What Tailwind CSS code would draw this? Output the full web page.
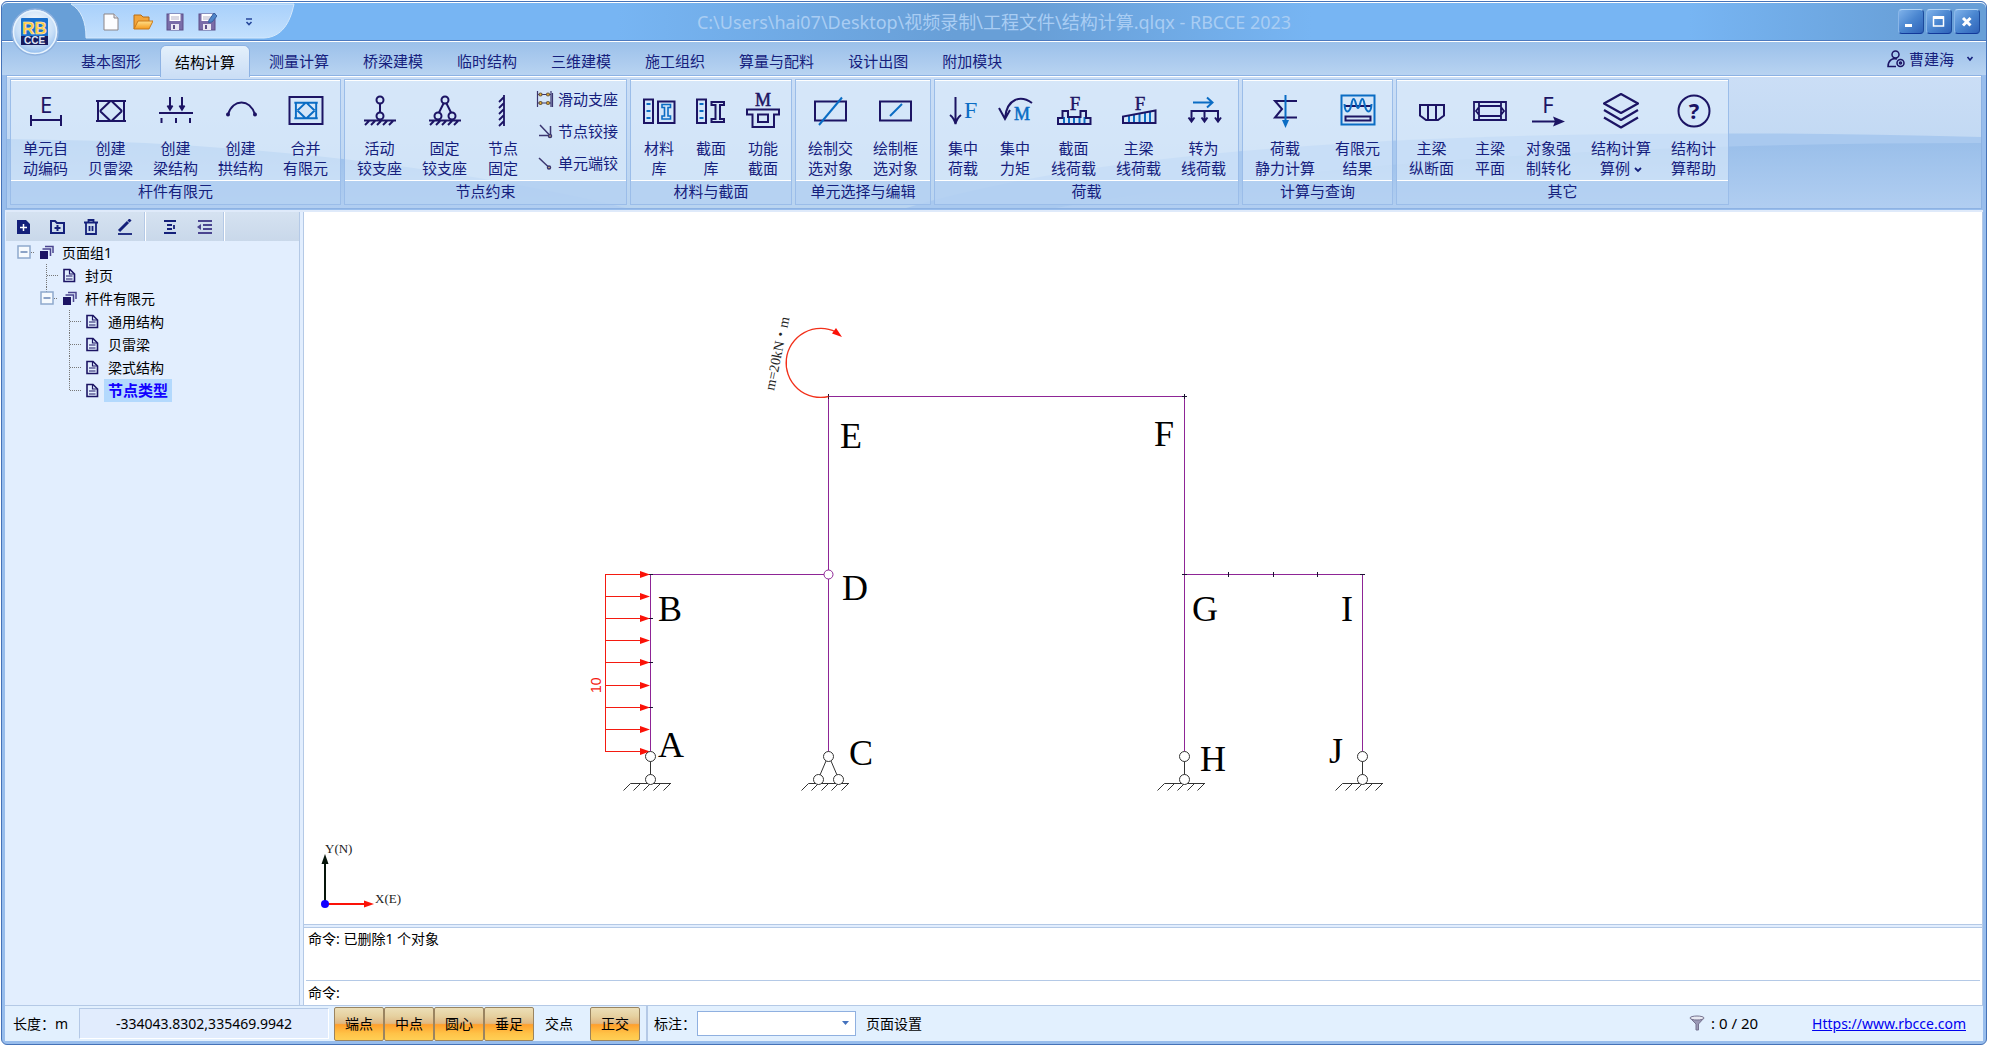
<!DOCTYPE html>
<html lang="zh-CN">
 <head>
  <meta charset="utf-8"/>
  <meta content="width=device-width, initial-scale=1" name="viewport"/>
  <title>结构计算.qlqx - RBCCE 2023</title>
  <script src="https://cdn.jsdelivr.net/npm/@tailwindcss/browser@4"></script>
 </head>
 <body class="h-screen overflow-hidden bg-white pt-px pb-px pl-px pr-0.5 font-['Noto_Sans','Noto_Sans_CJK_SC',sans-serif] text-sm text-black">
  <!-- Shared icon parts -->
  <svg aria-hidden="true" class="absolute size-0">
   <defs>
    <g id="bailey">
     <path d="M3 8H33M3 28H33M5 8V28M31 8V28M7 18L17 8.500M29 18L19 8.500M7 18L17 27.500M29 18L19 27.500"/>
    </g>
    <g id="hatch">
     <path d="M2 27.500H34M7 28L3 32M13 28L9 32M19 28L15 32M25 28L21 32M31 28L27 32"/>
    </g>
    <g id="doc">
     <path d="M6 5.500H12L16.500 10V17.500H6Z" fill="none" stroke="#1c1464" stroke-width="1.600"/>
     <path d="M11.500 5.500V10H16M8 12H14.500M8 15H14.500" fill="none" stroke="#1c1464" stroke-width="1.200"/>
    </g>
    <g id="pages">
     <path d="M10 5.500H18V12M7.500 8H15.500V15" fill="none" stroke="#4b4590" stroke-width="1.500"/>
     <rect fill="#1c1464" height="8" width="8" x="5" y="10"/>
    </g>
    <g id="minus-box">
     <rect fill="#f6fafe" height="12" stroke="#8fa9cd" stroke-width="1.500" width="12" x="6" y="5"/>
     <path d="M8.500 11H15.500" stroke="#6886b5" stroke-width="1.500"/>
    </g>
    <g id="ground" fill="none" stroke="#333">
     <path d="M-20 27.500H20.500M-20 27.500L-27 34.500M-10 27.500L-17 34.500M0 27.500L-7 34.500M10 27.500L3 34.500M20 27.500L13 34.500"/>
    </g>
    <g id="roller" stroke="#333">
     <use href="#ground"/>
     <path d="M0 5V19"/>
     <circle cx="0" cy="0.500" fill="#fff" r="5"/>
     <circle cx="0" cy="23.500" fill="#fff" r="5"/>
    </g>
    <path id="head" d="M0 0L-10 -3.500V3.500Z"/>
    <linearGradient id="qa" x1="0" x2="0" y1="0" y2="1">
     <stop offset="0" stop-color="#a8d0fb"/>
     <stop offset="1" stop-color="#c3e0fd"/>
    </linearGradient>
    <linearGradient id="folder" x1="0" x2="0" y1="0" y2="1">
     <stop offset="0" stop-color="#ffe08a"/>
     <stop offset="1" stop-color="#f59a1c"/>
    </linearGradient>
    <linearGradient id="wave" x1="0" x2="0" y1="0" y2="1">
     <stop offset="0" stop-color="#9abfea"/>
     <stop offset="1" stop-color="#b1cef1"/>
    </linearGradient>
    <radialGradient id="orb" cx="0.500" cy="0.350" r="0.700">
     <stop offset="0" stop-color="#ffffff"/>
     <stop offset="0.600" stop-color="#c6def7"/>
     <stop offset="1" stop-color="#7fb0ea"/>
    </radialGradient>
   </defs>
  </svg>

  <div class="relative flex h-full flex-col rounded-md border border-[#4673b8] bg-[#98bdec]">
   <!-- Application button -->
   <button aria-label="RBCCE" class="absolute top-[6px] left-[9px] z-10" type="button">
    <svg class="size-12" viewBox="0 0 48 48">
     <circle cx="24" cy="24" fill="url(#orb)" r="23" stroke="#8fb2df" stroke-width="1.500"/>
     <circle cx="24" cy="24" fill="none" r="21.500" stroke="#e8f3fd" stroke-width="1.500"/>
     <rect fill="#1b70cc" height="27" rx="1" width="27" x="10" y="10"/>
     <rect fill="#171a5e" height="9" width="27" x="10" y="28"/>
     <text fill="#ffc63a" font-family="Liberation Sans" font-size="17" font-weight="bold" stroke="#fff3cf" stroke-width="0.500" text-anchor="middle" x="23.500" y="26">RB</text>
     <text fill="#dfe6f5" font-family="Liberation Sans" font-size="10" font-weight="bold" text-anchor="middle" x="23.500" y="36">CCE</text>
    </svg>
   </button>

   <!-- Title bar -->
   <header class="relative flex h-[39px] shrink-0 items-center rounded-t-md border-t border-b border-t-white border-b-[#4d79be] bg-[linear-gradient(90deg,#689fd7_0%,#689fd7_4%,#77b5f3_14%,#77b5f3_31%,#689fd7_48%,#689fd7_52%,#77b5f3_66%,#77b5f3_85%,#689fd7_97%)]">
    <svg class="absolute top-0 left-0 h-9 w-[300px]" viewBox="0 0 300 36">
     <path d="M69 1C79 7 84 18 84 35H262C280 34 288 20 292 1Z" fill="url(#qa)" stroke="#d5e9fc"/>
    </svg>
    <nav class="relative flex items-center gap-3 pl-[99px]">
     <button aria-label="新建" type="button"><svg class="size-5" viewBox="0 0 20 20"><path d="M3 2H13L17 6V18H3Z" fill="#fcfdff" stroke="#8c8587"/><path d="M13 2V6H17" fill="#dfe3ee" stroke="#8c8587"/></svg></button>
     <button aria-label="打开" type="button"><svg class="size-5" viewBox="0 0 20 20"><path d="M1 17V3H8L10 5H16V9" fill="#f3a53a" stroke="#b96c12"/><path d="M1 17L5 9H20L16 17Z" fill="url(#folder)" stroke="#c9791a"/></svg></button>
     <button aria-label="保存" type="button"><svg class="size-5" viewBox="0 0 20 20"><rect fill="#7a6da8" height="16" stroke="#5d4f88" width="16" x="2" y="2"/><rect fill="#fff" height="7" width="11" x="4.500" y="2"/><path d="M6 5H14M6 7H14" stroke="#b5b2c8"/><rect fill="#e9e8f2" height="6" width="8" x="6" y="12"/><rect fill="#5d4f88" height="4" width="2" x="8" y="13"/></svg></button>
     <button aria-label="另存为" type="button"><svg class="size-5" viewBox="0 0 20 20"><rect fill="#7a6da8" height="16" stroke="#5d4f88" width="16" x="2" y="2"/><rect fill="#fff" height="7" width="11" x="4.500" y="2"/><path d="M6 5H14M6 7H14" stroke="#b5b2c8"/><rect fill="#e9e8f2" height="6" width="8" x="6" y="12"/><rect fill="#5d4f88" height="4" width="2" x="8" y="13"/><path d="M12 8L17 1L20 4L15 10L11.500 10.500Z" fill="#4f86c9" stroke="#3a62a0"/></svg></button>
     <button aria-label="自定义快速访问" class="ml-4" type="button"><svg class="h-2 w-2" fill="none" viewBox="0 0 8 8"><path d="M1 1H7M1.500 4L4 6.500L6.500 4" stroke="#26479b" stroke-width="1.600"/></svg></button>
    </nav>
    <h1 class="absolute inset-x-0 text-center text-lg leading-7 text-[#a9cdf3]">C:\Users\hai07\Desktop\视频录制\工程文件\结构计算.qlqx - RBCCE 2023</h1>
    <div class="relative ml-auto flex gap-0.5 pr-1.5">
     <button aria-label="最小化" class="h-[25px] w-[26px] rounded-sm border border-t-[#b5d6f6] border-r-[#1c4a9c] border-b-[#12389a] border-l-[#8ab6e8] bg-linear-to-br from-[#7fb2ea] via-[#4a86d0] to-[#2f62b8]" type="button"><svg class="size-6" viewBox="0 0 24 24"><path d="M6 15.500H13" stroke="#fff" stroke-width="3"/></svg></button>
     <button aria-label="最大化" class="h-[25px] w-[26px] rounded-sm border border-t-[#b5d6f6] border-r-[#1c4a9c] border-b-[#12389a] border-l-[#8ab6e8] bg-linear-to-br from-[#7fb2ea] via-[#4a86d0] to-[#2f62b8]" type="button"><svg class="size-6" viewBox="0 0 24 24"><path d="M6.500 7H16.500V16H6.500Z" fill="none" stroke="#fff" stroke-width="1.500"/><path d="M6 7.500H17" stroke="#fff" stroke-width="3"/></svg></button>
     <button aria-label="关闭" class="h-[25px] w-[26px] rounded-sm border border-t-[#b5d6f6] border-r-[#1c4a9c] border-b-[#12389a] border-l-[#8ab6e8] bg-linear-to-br from-[#7fb2ea] via-[#4a86d0] to-[#2f62b8]" type="button"><svg class="size-6" viewBox="0 0 24 24"><path d="M8 8L15.500 15.500M15.500 8L8 15.500" stroke="#fff" stroke-width="3"/></svg></button>
    </div>
   </header>

   <!-- Ribbon tabs -->
   <nav class="flex h-[34px] shrink-0 items-end gap-1 border-t border-white bg-linear-to-b from-[#9bc0ea] to-[#b8d3f1] pl-16 text-[15px] leading-7 text-[#15207d]">
    <button class="h-[29px] px-[15px]" type="button">基本图形</button>
    <button class="relative z-10 -mb-[2px] h-[32px] rounded-t-md border border-b-0 border-[#8db2e3] bg-linear-to-b from-[#e4f0fb] to-[#cbdef6] px-[14px] text-black" type="button">结构计算</button>
    <button class="h-[29px] px-[15px]" type="button">测量计算</button>
    <button class="h-[29px] px-[15px]" type="button">桥梁建模</button>
    <button class="h-[29px] px-[15px]" type="button">临时结构</button>
    <button class="h-[29px] px-[15px]" type="button">三维建模</button>
    <button class="h-[29px] px-[15px]" type="button">施工组织</button>
    <button class="h-[29px] px-[15px]" type="button">算量与配料</button>
    <button class="h-[29px] px-[15px]" type="button">设计出图</button>
    <button class="h-[29px] px-[15px]" type="button">附加模块</button>
    <button class="mr-3 mb-0.5 ml-auto flex items-center gap-1" type="button">
     <svg class="size-[18px]" fill="none" stroke="#1c1464" stroke-width="1.500" viewBox="0 0 18 18"><circle cx="8.500" cy="4.500" r="3.500"/><path d="M10 9C5 7.500 1 11 1 16.500H9"/><circle cx="13.500" cy="13" r="3.500"/><circle cx="13.500" cy="13" r="1"/></svg>
     曹建海
     <svg class="ml-2 size-2" fill="none" viewBox="0 0 8 8"><path d="M1.500 2L4 5L6.500 2" stroke="#15207d" stroke-width="1.600"/></svg>
    </button>
   </nav>

   <!-- Ribbon panel -->
   <section class="relative mx-1 flex h-[134px] shrink-0 gap-[3px] border border-[#8db2e3] bg-linear-to-b from-[#cbdef6] to-[#b9d4f0] px-[3px] py-[3px] text-[15px] leading-5 text-[#15207d] shadow-[inset_0_1px_0_#fff]">
    <svg class="absolute inset-x-0 top-px h-[131px] w-full" preserveAspectRatio="none" viewBox="0 0 1976 131">
     <path d="M0 62Q350 66 620 131H0Z" fill="url(#wave)"/>
     <path d="M900 131Q1200 40 1976 60V131Z" fill="#a9c9ef"/>
     <path d="M1050 131Q1400 66 1976 66V131Z" fill="url(#wave)"/>
    </svg>

    <div class="relative flex flex-col border border-[#9bbde9] bg-[#deedfb]/60 shadow-[inset_0_1px_0_#fff]">
     <div class="flex flex-1 px-0.5 pt-[13px]">
      <button class="flex w-[65px] flex-col items-center gap-[9px]" type="button">
       <svg class="size-9 overflow-visible" fill="none" stroke="#1c1464" stroke-width="2" viewBox="0 0 36 36"><path d="M2 27H34M3 22V33M33 22V33"/><text fill="#1c1464" font-family="Noto Sans" font-size="22" stroke="none" text-anchor="middle" x="18" y="20">E</text></svg>
       <span>单元自<br/>动编码</span>
      </button>
      <button class="flex w-[65px] flex-col items-center gap-[9px]" type="button">
       <svg class="size-9" fill="none" stroke="#1c1464" stroke-width="2" viewBox="0 0 36 36"><use href="#bailey"/></svg>
       <span>创建<br/>贝雷梁</span>
      </button>
      <button class="flex w-[65px] flex-col items-center gap-[9px]" type="button">
       <svg class="size-9" fill="none" stroke="#1c1464" stroke-width="2" viewBox="0 0 36 36"><path d="M1 20H35M12 4V16M24 4V16M9.500 12.500L12 16.500L14.500 12.500M21.500 12.500L24 16.500L26.500 12.500M3.500 25V30M18 25V30M32 25V30"/></svg>
       <span>创建<br/>梁结构</span>
      </button>
      <button class="flex w-[65px] flex-col items-center gap-[9px]" type="button">
       <svg class="size-9" fill="none" stroke="#1c1464" stroke-width="2" viewBox="0 0 36 36"><path d="M5 21.500C10 5.500 27 5.500 32 21.500"/><circle cx="5" cy="21.500" fill="#1c1464" r="1"/><circle cx="32" cy="21.500" fill="#1c1464" r="1"/></svg>
       <span>创建<br/>拱结构</span>
      </button>
      <button class="flex w-[65px] flex-col items-center gap-[9px]" type="button">
       <svg class="size-9" fill="none" stroke="#1c1464" stroke-width="2" viewBox="0 0 36 36"><rect height="27" width="33" x="1.500" y="4"/><g stroke="#0a6cc4" stroke-width="2.500" transform="translate(4 3.500) scale(0.780)"><use href="#bailey"/></g></svg>
       <span>合并<br/>有限元</span>
      </button>
     </div>
     <h2 class="h-6 border-t border-white bg-[#a5c6ee]/60 text-center leading-5">杆件有限元</h2>
    </div>

    <div class="relative flex flex-col border border-[#9bbde9] bg-[#deedfb]/60 shadow-[inset_0_1px_0_#fff]">
     <div class="flex flex-1 px-0.5 pt-[13px]">
      <button class="flex w-[65px] flex-col items-center gap-[9px]" type="button">
       <svg class="size-9" fill="none" stroke="#1c1464" stroke-width="2" viewBox="0 0 36 36"><circle cx="18" cy="7" r="3.500"/><circle cx="18" cy="23" r="3.500"/><path d="M18 10.500V19.500"/><use href="#hatch"/></svg>
       <span>活动<br/>铰支座</span>
      </button>
      <button class="flex w-[65px] flex-col items-center gap-[9px]" type="button">
       <svg class="size-9" fill="none" stroke="#1c1464" stroke-width="2" viewBox="0 0 36 36"><circle cx="18" cy="7" r="3.500"/><circle cx="11" cy="23" r="3.500"/><circle cx="25" cy="23" r="3.500"/><path d="M16.500 10.500L12 19.500M19.500 10.500L24 19.500"/><use href="#hatch"/></svg>
       <span>固定<br/>铰支座</span>
      </button>
      <button class="flex w-[52px] flex-col items-center gap-[9px]" type="button">
       <svg class="size-9" fill="none" stroke="#1c1464" stroke-width="1.800" viewBox="0 0 36 36"><path d="M19 2V33M19 4L14 9M19 10L14 15M19 16L14 21M19 22L14 27M19 28L14 33"/></svg>
       <span>节点<br/>固定</span>
      </button>
      <div class="-mt-1 flex w-[95px] flex-col gap-3 pl-[7px]">
       <button class="flex items-center gap-1" type="button">
        <svg class="size-[18px]" fill="none" stroke="#3b3670" stroke-width="1.200" viewBox="0 0 18 18"><path d="M1.500 1V17M15 1V17M2 4.500H15M2 13H15M16.500 3V17"/><g fill="#f3b52b" stroke="#6a5a42"><circle cx="4.500" cy="4.500" r="1.500"/><circle cx="12" cy="4.500" r="1.500"/><circle cx="4.500" cy="13" r="1.500"/><circle cx="12" cy="13" r="1.500"/></g></svg>
        滑动支座
       </button>
       <button class="flex items-center gap-1" type="button">
        <svg class="size-[18px]" fill="none" stroke="#3b3670" stroke-width="1.500" viewBox="0 0 18 18"><path d="M4 3L13 12.500M14.500 4V12M3 13.500H12"/><circle cx="14" cy="14" fill="#f3d27b" r="1.500"/></svg>
        节点铰接
       </button>
       <button class="flex items-center gap-1" type="button">
        <svg class="size-[18px]" fill="none" stroke="#3b3670" stroke-width="1.500" viewBox="0 0 18 18"><path d="M3 4L12 12.500"/><circle cx="13" cy="13.500" fill="#f3d27b" r="1.500"/></svg>
        单元端铰
       </button>
      </div>
     </div>
     <h2 class="h-6 border-t border-white bg-[#a5c6ee]/60 text-center leading-5">节点约束</h2>
    </div>

    <div class="relative flex flex-col border border-[#9bbde9] bg-[#deedfb]/60 shadow-[inset_0_1px_0_#fff]">
     <div class="flex flex-1 px-0.5 pt-[13px]">
      <button class="flex w-[52px] flex-col items-center gap-[9px]" type="button">
       <svg class="size-9" fill="none" stroke="#1c1464" stroke-width="2" viewBox="0 0 36 36"><path d="M3 6.500H12V30H3ZM17 8.500H33.500V30H17Z"/><path d="M5.500 11H9.500M5.500 18H9.500M5.500 25H9.500" stroke="#0a6cc4"/><path d="M21 11.500H29.500V14.500H27V23H29.500V26H21V23H23.500V14.500H21Z" stroke="#0a6cc4" stroke-width="1.600"/></svg>
       <span>材料<br/>库</span>
      </button>
      <button class="flex w-[52px] flex-col items-center gap-[9px]" type="button">
       <svg class="size-9" fill="none" stroke="#1c1464" stroke-width="2" viewBox="0 0 36 36"><path d="M4 6.500H13V30H4Z"/><path d="M6.500 11H10.500M6.500 18H10.500M6.500 25H10.500" stroke="#0a6cc4"/><path d="M18.500 9H31V12H27V26H31V29H18.500V26H22.500V12H18.500Z"/></svg>
       <span>截面<br/>库</span>
      </button>
      <button class="flex w-[52px] flex-col items-center gap-[9px]" type="button">
       <svg class="size-9 overflow-visible" fill="none" stroke="#1c1464" stroke-width="2" viewBox="0 0 36 36"><path d="M2 16.500H34V21.500H29V34H7.500V21.500H2ZM13 21.500H23V29H13Z"/><text fill="#1c1464" font-family="Liberation Serif" font-size="18" stroke="#1c1464" stroke-width="0.500" text-anchor="middle" x="18" y="13">M</text></svg>
       <span>功能<br/>截面</span>
      </button>
     </div>
     <h2 class="h-6 border-t border-white bg-[#a5c6ee]/60 text-center leading-5">材料与截面</h2>
    </div>

    <div class="relative flex flex-col border border-[#9bbde9] bg-[#deedfb]/60 shadow-[inset_0_1px_0_#fff]">
     <div class="flex flex-1 px-0.5 pt-[13px]">
      <button class="flex w-[65px] flex-col items-center gap-[9px]" type="button">
       <svg class="size-9" fill="none" stroke="#1c1464" stroke-width="2" viewBox="0 0 36 36"><rect height="19" width="31" x="2" y="8.500"/><path d="M6 32L29 4.500" stroke="#0a6cc4"/></svg>
       <span>绘制交<br/>选对象</span>
      </button>
      <button class="flex w-[65px] flex-col items-center gap-[9px]" type="button">
       <svg class="size-9" fill="none" stroke="#1c1464" stroke-width="2" viewBox="0 0 36 36"><rect height="19" width="31" x="2" y="8.500"/><path d="M12 23L24 11" stroke="#0a6cc4"/></svg>
       <span>绘制框<br/>选对象</span>
      </button>
     </div>
     <h2 class="h-6 border-t border-white bg-[#a5c6ee]/60 text-center leading-5">单元选择与编辑</h2>
    </div>

    <div class="relative flex flex-col border border-[#9bbde9] bg-[#deedfb]/60 shadow-[inset_0_1px_0_#fff]">
     <div class="flex flex-1 px-0.5 pt-[13px]">
      <button class="flex w-[52px] flex-col items-center gap-[9px]" type="button">
       <svg class="size-9" fill="none" stroke="#1c1464" stroke-width="2" viewBox="0 0 36 36"><path d="M10.500 4V31M5 22Q9 25 10.500 31Q12 25 16 22"/><text fill="#0a6cc4" font-family="Liberation Serif" font-size="24" stroke="none" x="19" y="25">F</text></svg>
       <span>集中<br/>荷载</span>
      </button>
      <button class="flex w-[52px] flex-col items-center gap-[9px]" type="button">
       <svg class="size-9" fill="none" stroke="#1c1464" stroke-width="2" viewBox="0 0 36 36"><path d="M35 10C24 2 10 5 8 25M2 15L8 26L13 17"/><text fill="#0a6cc4" font-family="Liberation Serif" font-size="18" stroke="#0a6cc4" stroke-width="0.500" x="17" y="27">M</text></svg>
       <span>集中<br/>力矩</span>
      </button>
      <button class="flex w-[65px] flex-col items-center gap-[9px]" type="button">
       <svg class="size-9 overflow-visible" fill="none" stroke="#1c1464" stroke-width="2" viewBox="0 0 36 36"><path d="M8 24V31M13 24V31M18 24V31M23.500 24V31M28.500 24V31" stroke="#0a6cc4"/><path d="M2 31V25H6.500V18H12V24H24.500V18H30V25H34.500V31Z"/><text fill="#1c1464" font-family="Liberation Serif" font-size="19" stroke="#1c1464" stroke-width="0.400" text-anchor="middle" x="19" y="17">F</text></svg>
       <span>截面<br/>线荷载</span>
      </button>
      <button class="flex w-[65px] flex-col items-center gap-[9px]" type="button">
       <svg class="size-9 overflow-visible" fill="none" stroke="#1c1464" stroke-width="2" viewBox="0 0 36 36"><path d="M8 23V30M13 22V30M18.500 21V30M24 20V30M29 19V30" stroke="#0a6cc4"/><path d="M2 30V23.500L34.500 17.500V30Z"/><text fill="#1c1464" font-family="Liberation Serif" font-size="19" stroke="#1c1464" stroke-width="0.400" text-anchor="middle" x="19" y="17">F</text></svg>
       <span>主梁<br/>线荷载</span>
      </button>
      <button class="flex w-[65px] flex-col items-center gap-[9px]" type="button">
       <svg class="size-9" fill="none" stroke="#1c1464" stroke-width="2" viewBox="0 0 36 36"><path d="M7 9.500H26M21 4.500L26.500 9.500L21 14.500" stroke="#0a6cc4"/><path d="M5.500 28V18H32V28M18.500 18V28M2.500 24.500L5.500 28.500L8.500 24.500M15.500 24.500L18.500 28.500L21.500 24.500M29 24.500L32 28.500L35 24.500"/></svg>
       <span>转为<br/>线荷载</span>
      </button>
     </div>
     <h2 class="h-6 border-t border-white bg-[#a5c6ee]/60 text-center leading-5">荷载</h2>
    </div>

    <div class="relative flex flex-col border border-[#9bbde9] bg-[#deedfb]/60 shadow-[inset_0_1px_0_#fff]">
     <div class="flex flex-1 px-0.5 pt-[13px]">
      <button class="flex w-[80px] flex-col items-center gap-[9px]" type="button">
       <svg class="size-9" fill="none" stroke="#1c1464" stroke-width="2" viewBox="0 0 36 36"><path d="M30 8H8L15 16L8 24.500H30"/><path d="M18.500 2V30" stroke="#0a6cc4"/><path d="M15 27H22L18.500 35Z" fill="#0a6cc4" stroke="none"/></svg>
       <span>荷载<br/>静力计算</span>
      </button>
      <button class="flex w-[65px] flex-col items-center gap-[9px]" type="button">
       <svg class="size-9" fill="none" stroke="#1c1464" stroke-width="2" viewBox="0 0 36 36"><rect height="29" stroke="#0a6cc4" width="33" x="1.500" y="2.500"/><path d="M5 13H31"/><path d="M4.500 11C5 21 9.500 21 11.500 11Q13.500 1 16 11Q18 19 20 11Q22.500 1 24.500 11C26.500 21 31 21 31.500 11" stroke="#0a6cc4"/><rect height="4" width="25" x="5.500" y="23.500"/></svg>
       <span>有限元<br/>结果</span>
      </button>
     </div>
     <h2 class="h-6 border-t border-white bg-[#a5c6ee]/60 text-center leading-5">计算与查询</h2>
    </div>

    <div class="relative flex flex-col border border-[#9bbde9] bg-[#deedfb]/60 shadow-[inset_0_1px_0_#fff]">
     <div class="flex flex-1 px-0.5 pt-[13px]">
      <button class="flex w-[65px] flex-col items-center gap-[9px]" type="button">
       <svg class="size-9" fill="none" stroke="#1c1464" stroke-width="2" viewBox="0 0 36 36"><path d="M6 12H30V22.500L24 27H12L6 22.500ZM14 12V27M22 12V27"/></svg>
       <span>主梁<br/>纵断面</span>
      </button>
      <button class="flex w-[52px] flex-col items-center gap-[9px]" type="button">
       <svg class="size-9" fill="none" stroke="#1c1464" stroke-width="1.800" viewBox="0 0 36 36"><path d="M2 9H34V27H2ZM7 9V27M29 9V27M8 13H28L32 18L28 23H8L4 18Z"/></svg>
       <span>主梁<br/>平面</span>
      </button>
      <button class="flex w-[65px] flex-col items-center gap-[9px]" type="button">
       <svg class="size-9 overflow-visible" fill="none" stroke="#1c1464" stroke-width="2" viewBox="0 0 36 36"><path d="M1 28.500H26"/><path d="M22 23.500L34 28.500L22 33.500L24 28.500Z" fill="#1c1464" stroke="none"/><text fill="#1c1464" font-family="Noto Sans" font-size="22" stroke="none" text-anchor="middle" x="17" y="20">F</text></svg>
       <span>对象强<br/>制转化</span>
      </button>
      <button class="flex w-[80px] flex-col items-center gap-[9px]" type="button">
       <svg class="size-9" fill="none" stroke="#1c1464" stroke-linejoin="round" stroke-width="2.200" viewBox="0 0 36 36"><path d="M18 1L35 10.500L18 20L1 10.500ZM1 17L18 27L35 17M1 24.500L18 34.500L35 24.500"/></svg>
       <span class="whitespace-nowrap">结构计算<br/>算例 <svg class="inline size-2" fill="none" viewBox="0 0 8 8"><path d="M1 2L4 5L7 2" stroke="#15207d" stroke-width="1.800"/></svg></span>
      </button>
      <button class="flex w-[65px] flex-col items-center gap-[9px]" type="button">
       <svg class="size-9" fill="none" stroke="#1c1464" stroke-width="2" viewBox="0 0 36 36"><circle cx="18" cy="18" r="15.500"/><text fill="#1c1464" font-family="Noto Sans" font-size="22" font-weight="bold" stroke="none" text-anchor="middle" x="18" y="26">?</text></svg>
       <span>结构计<br/>算帮助</span>
      </button>
     </div>
     <h2 class="h-6 border-t border-white bg-[#a5c6ee]/60 text-center leading-5">其它</h2>
    </div>
   </section>

   <!-- Workspace -->
   <div class="mx-[3px] mt-px flex min-h-0 flex-1 border-t-2 border-t-[#dfeafa] bg-[#e2eefe]">
    <aside class="flex w-[295px] shrink-0 flex-col border-r border-[#b4c9e6] pl-px">
     <div class="flex h-[29px] shrink-0 items-center bg-linear-to-b from-[#d5e2f1] to-[#c9d8ea]">
      <button aria-label="新建页面" class="ml-[9px] w-[34px]" type="button"><svg class="size-4" viewBox="0 0 16 16"><path d="M2 1H11L15 5V15H2Z" fill="#14207a"/><path d="M8.500 5V12M5 8.500H12" stroke="#fff" stroke-width="1.500"/></svg></button>
      <button aria-label="新建页面组" class="w-[34px]" type="button"><svg class="size-4" fill="none" stroke="#14207a" stroke-width="2" viewBox="0 0 16 16"><path d="M2 2H6L8 4H15V14H2ZM8.500 6V12M5.500 9H11.500"/></svg></button>
      <button aria-label="删除" class="w-[34px]" type="button"><svg class="size-4" fill="none" stroke="#14207a" stroke-width="1.800" viewBox="0 0 16 16"><path d="M1 3.500H15M3 4V15H13V4M5.500 3V1H10.500V3M6.500 7V12M9.500 7V12"/></svg></button>
      <button aria-label="重命名" class="w-[27px]" type="button"><svg class="size-4" fill="none" stroke="#14207a" viewBox="0 0 16 16"><path d="M1 15H15" stroke-width="1.800"/><path d="M2 12L11 3" stroke-width="3"/><path d="M11.500 2.500L13.500 0.500" stroke-width="3"/></svg></button>
      <span class="h-full w-0.5 border-r border-white bg-[#b4c9e6]"></span>
      <button aria-label="缩进" class="ml-4 w-[34px]" type="button"><svg class="size-4" fill="none" stroke="#14207a" stroke-width="1.800" viewBox="0 0 16 16"><path d="M2 2H14M5 6H10M5 10H10M2 14H14M12 6V10"/></svg></button>
      <button aria-label="减少缩进" class="w-[27px]" type="button"><svg class="size-4" fill="none" stroke="#4b4590" stroke-width="1.800" viewBox="0 0 16 16"><path d="M2 2H16M7 6H16M7 10H16M2 14H16"/><path d="M1 8L5 5V11Z" fill="#4b4590" stroke="none"/></svg></button>
      <span class="h-full w-0.5 border-r border-white bg-[#b4c9e6]"></span>
     </div>
     <ul class="pl-[6px] leading-[23px]">
      <li class="flex h-[23px]">
       <svg class="size-[23px]" viewBox="0 0 23 23"><use href="#minus-box"/><path d="M19 11.500H23" stroke="#777" stroke-dasharray="1 1"/></svg>
       <svg class="size-[23px]" viewBox="0 0 23 23"><use href="#pages"/></svg>
       <span class="px-1">页面组1</span>
      </li>
      <li class="flex h-[23px] pl-[23px]">
       <svg class="size-[23px]" viewBox="0 0 23 23"><path d="M11.500 0V23M12 11.500H23" stroke="#777" stroke-dasharray="1 1"/></svg>
       <svg class="size-[23px]" viewBox="0 0 23 23"><use href="#doc"/></svg>
       <span class="px-1">封页</span>
      </li>
      <li class="flex h-[23px] pl-[23px]">
       <svg class="size-[23px]" viewBox="0 0 23 23"><path d="M11.500 0V5M19 11.500H23" stroke="#777" stroke-dasharray="1 1"/><use href="#minus-box"/></svg>
       <svg class="size-[23px]" viewBox="0 0 23 23"><use href="#pages"/></svg>
       <span class="px-1">杆件有限元</span>
      </li>
      <li class="flex h-[23px] pl-[46px]">
       <svg class="size-[23px]" viewBox="0 0 23 23"><path d="M11.500 0V23M12 11.500H23" stroke="#777" stroke-dasharray="1 1"/></svg>
       <svg class="size-[23px]" viewBox="0 0 23 23"><use href="#doc"/></svg>
       <span class="px-1">通用结构</span>
      </li>
      <li class="flex h-[23px] pl-[46px]">
       <svg class="size-[23px]" viewBox="0 0 23 23"><path d="M11.500 0V23M12 11.500H23" stroke="#777" stroke-dasharray="1 1"/></svg>
       <svg class="size-[23px]" viewBox="0 0 23 23"><use href="#doc"/></svg>
       <span class="px-1">贝雷梁</span>
      </li>
      <li class="flex h-[23px] pl-[46px]">
       <svg class="size-[23px]" viewBox="0 0 23 23"><path d="M11.500 0V23M12 11.500H23" stroke="#777" stroke-dasharray="1 1"/></svg>
       <svg class="size-[23px]" viewBox="0 0 23 23"><use href="#doc"/></svg>
       <span class="px-1">梁式结构</span>
      </li>
      <li class="flex h-[23px] pl-[46px]">
       <svg class="size-[23px]" viewBox="0 0 23 23"><path d="M11.500 0V12M12 11.500H23" stroke="#777" stroke-dasharray="1 1"/></svg>
       <svg class="size-[23px]" viewBox="0 0 23 23"><use href="#doc"/></svg>
       <span class="bg-[#b3d9fd] px-1 text-[15px] font-bold text-[#1200ff]">节点类型</span>
      </li>
     </ul>
    </aside>

    <main class="ml-[3px] flex min-w-0 flex-1 flex-col border-x border-[#b4c9e6] bg-white">
     <!-- Drawing canvas -->
     <div class="relative min-h-0 flex-1">
      <svg class="absolute inset-0 size-full" fill="none">
       <g transform="translate(-304 -212)">
        <g stroke="#8e2596">
         <path d="M650.500 751.500V574.500H828.500M828.500 751.500V396.500H1184.500V751.500M1184.500 574.500H1362.500V751.500"/>
         <circle cx="828.500" cy="574.500" fill="#fff" r="4.500"/>
        </g>
        <path d="M648 574.500H653M648 618.500H653M648 662.500H653M648 707.500H653M828.500 394V399M1184.500 394V399M1182 396.500H1187M1182 574.500H1187M1360 574.500H1365M1228.500 572V577M1273.500 572V577M1317.500 572V577" stroke="#1a1030"/>
        <!-- Uniform load -->
        <g stroke="#f41a10">
         <path d="M605.500 574V752M605.500 574.500H645M605.500 596.500H645M605.500 618.500H645M605.500 640.500H645M605.500 662.500H645M605.500 685.500H645M605.500 707.500H645M605.500 729.500H645M605.500 751.500H645"/>
        </g>
        <g fill="#fb1208">
         <use href="#head" x="650" y="574.500"/>
         <use href="#head" x="650" y="596.500"/>
         <use href="#head" x="650" y="618.500"/>
         <use href="#head" x="650" y="640.500"/>
         <use href="#head" x="650" y="662.500"/>
         <use href="#head" x="650" y="685.500"/>
         <use href="#head" x="650" y="707.500"/>
         <use href="#head" x="650" y="729.500"/>
         <use href="#head" x="650" y="751.500"/>
        </g>
        <text fill="#f41a10" font-family="Liberation Sans" font-size="14" transform="translate(601 693) rotate(-90)">10</text>
        <!-- Moment -->
        <path d="M828.500 396.500A34.500 34.500 0 1 1 836 332" stroke="#f2301a" stroke-width="1.300"/>
        <path d="M842 337L832 333.500L836 328Z" fill="#fb1208"/>
        <text fill="#222" font-family="Liberation Serif, Noto Sans CJK SC" font-size="14" transform="translate(774 391) rotate(-78)">m=20kN・m</text>
        <!-- Supports -->
        <use href="#roller" x="650.500" y="756"/>
        <use href="#roller" x="1184.500" y="756"/>
        <use href="#roller" x="1362.500" y="756"/>
        <g stroke="#333">
         <use href="#ground" x="828.500" y="756"/>
         <path d="M826 761L820 775M831 761L837 775"/>
         <circle cx="828.500" cy="756.500" r="5"/>
         <circle cx="818.500" cy="779.500" fill="#fff" r="5"/>
         <circle cx="838.500" cy="779.500" fill="#fff" r="5"/>
        </g>
        <g fill="#000" font-family="Liberation Serif" font-size="36" text-anchor="middle">
         <text x="671" y="757">A</text>
         <text x="670" y="621">B</text>
         <text x="861" y="765">C</text>
         <text x="855" y="600">D</text>
         <text x="851" y="448">E</text>
         <text x="1164" y="446">F</text>
         <text x="1205" y="621">G</text>
         <text x="1213" y="771">H</text>
         <text x="1347" y="621">I</text>
         <text x="1336" y="763">J</text>
        </g>
       </g>
      </svg>
      <!-- Axis marker -->
      <svg class="absolute bottom-0 left-0 h-[100px] w-[120px]" fill="none" viewBox="0 0 120 100">
       <path d="M21 80V37" stroke="#06150a" stroke-width="2"/>
       <path d="M21 30L24.500 40H17.500Z" fill="#06150a"/>
       <path d="M21 80H60" stroke="#fb1208" stroke-width="2"/>
       <path d="M70 80L60 76.500V83.500Z" fill="#fb1208"/>
       <circle cx="21" cy="80" fill="#1200ff" r="4"/>
       <g fill="#222" font-family="Liberation Serif" font-size="13">
        <text x="21" y="29">Y(N)</text>
        <text x="71" y="79">X(E)</text>
       </g>
      </svg>
     </div>
     <!-- Command log -->
     <div class="h-1 shrink-0 border-y border-[#b4c9e6] bg-[#e2eefe]"></div>
     <output class="block h-[52px] shrink-0 px-1 leading-[22px]">命令: 已删除1 个对象</output>
     <label class="mx-0.5 flex h-[25px] shrink-0 items-center border-t border-[#b4c9e6] pl-0.5">命令:
      <input class="ml-1 h-5 flex-1 outline-none" type="text"/>
     </label>
    </main>
   </div>

   <!-- Status bar -->
   <footer class="mx-[3px] mb-[3px] flex h-9 shrink-0 items-center border-t border-[#b4c9e6] bg-[#e2f0fe]">
    <span class="w-[74px] pl-2 whitespace-nowrap">长度：m</span>
    <span class="h-[31px] w-[250px] border border-t-[#b4c9e6] border-r-white border-b-white border-l-[#b4c9e6] bg-[#e1ecfd] text-center leading-[29px]">-334043.8302,335469.9942</span>
    <div class="ml-[5px] flex h-[34px]">
     <button class="w-[50px] rounded-xs border border-[#9a8460] bg-[linear-gradient(#ecdfb8_0%,#e6d1a0_25%,#dfb883_48%,#ffa02c_52%,#ffc348_80%,#ffcf55_100%)]" type="button">端点</button>
     <button class="w-[50px] rounded-xs border border-[#9a8460] bg-[linear-gradient(#ecdfb8_0%,#e6d1a0_25%,#dfb883_48%,#ffa02c_52%,#ffc348_80%,#ffcf55_100%)]" type="button">中点</button>
     <button class="w-[50px] rounded-xs border border-[#9a8460] bg-[linear-gradient(#ecdfb8_0%,#e6d1a0_25%,#dfb883_48%,#ffa02c_52%,#ffc348_80%,#ffcf55_100%)]" type="button">圆心</button>
     <button class="w-[50px] rounded-xs border border-[#9a8460] bg-[linear-gradient(#ecdfb8_0%,#e6d1a0_25%,#dfb883_48%,#ffa02c_52%,#ffc348_80%,#ffcf55_100%)]" type="button">垂足</button>
     <button class="mr-1.5 w-[50px]" type="button">交点</button>
     <button class="w-[50px] rounded-xs border border-[#9a8460] bg-[linear-gradient(#ecdfb8_0%,#e6d1a0_25%,#dfb883_48%,#ffa02c_52%,#ffc348_80%,#ffcf55_100%)]" type="button">正交</button>
    </div>
    <span class="mr-[6px] ml-[6px] h-full w-0.5 bg-[#b4c9e6]"></span>
    <label class="w-[43px] whitespace-nowrap" for="dimension-style">标注：</label>
    <div class="relative">
     <select class="block h-[25px] w-[159px] appearance-none border border-[#8fb0e0] bg-white" id="dimension-style">
      <option></option>
     </select>
     <svg class="pointer-events-none absolute top-[10px] right-[7px] h-1 w-[7px]" viewBox="0 0 7 4"><path d="M0 0H7L3.500 4Z" fill="#4472bd"/></svg>
    </div>
    <button class="ml-[10px]" type="button">页面设置</button>
    <div class="ml-auto flex items-center gap-1.5 pr-[54px] text-[15px]">
     <svg class="size-4" viewBox="0 0 16 16"><path d="M1 3L7 9V15H9.500V9L15 3Z" fill="#9a98b5" stroke="#75728f"/><ellipse cx="8" cy="3" fill="#e8e9f2" rx="7" ry="2" stroke="#75728f"/></svg>
     : 0 / 20
    </div>
    <a class="mr-[17px] text-[#0000f0] underline" href="#">Https://www.rbcce.com</a>
   </footer>
  </div>
 </body>
</html>
